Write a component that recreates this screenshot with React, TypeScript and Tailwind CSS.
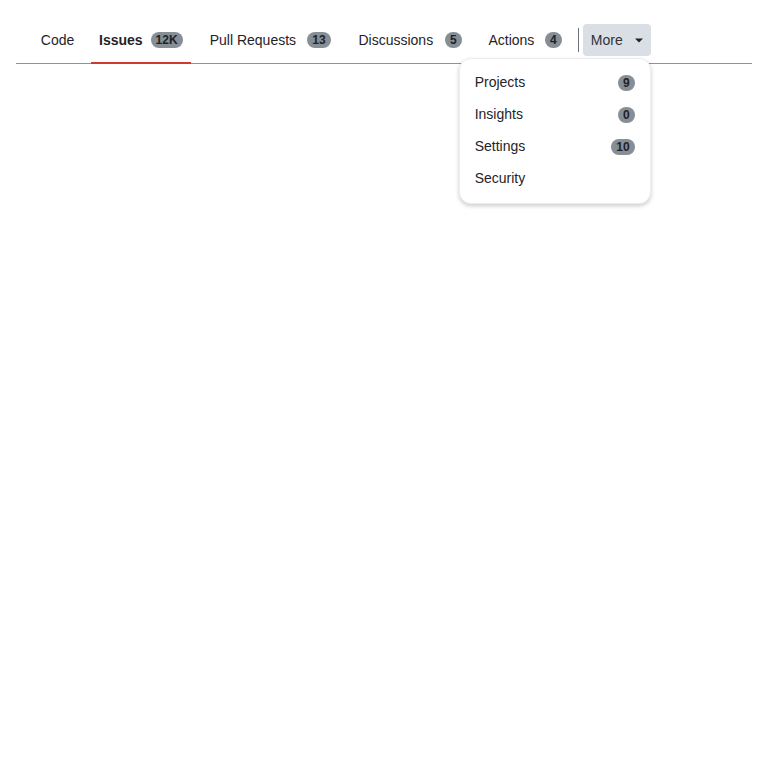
import { useState } from "react";

type Tab = { label: string; count?: string };

const tabs: Tab[] = [
  { label: "Code" },
  { label: "Issues", count: "12K" },
  { label: "Pull Requests", count: "13" },
  { label: "Discussions", count: "5" },
  { label: "Actions", count: "4" },
];

const moreItems: Tab[] = [
  { label: "Projects", count: "9" },
  { label: "Insights", count: "0" },
  { label: "Settings", count: "10" },
  { label: "Security" },
];

function Badge({ children }: { children: string }) {
  return (
    <span className="inline-flex h-4 items-center justify-center rounded-full bg-[#868e96] px-[5px] text-[12px] font-bold leading-none text-[#1f2328]">
      {children}
    </span>
  );
}

// label keeps the width of its bold version so tabs don't shift when active
function Label({ text, bold }: { text: string; bold: boolean }) {
  return (
    <span className="inline-grid text-center">
      <span className={`col-start-1 row-start-1 ${bold ? "font-bold" : ""}`}>{text}</span>
      <span className="invisible col-start-1 row-start-1 h-0 font-bold" aria-hidden>
        {text}
      </span>
    </span>
  );
}

export default function App() {
  const [active] = useState("Issues");

  return (
    <div className="min-h-screen bg-white font-['Liberation_Sans',Arial,sans-serif] text-[14px] text-[#1f2328]">
      <nav className="mx-4 mt-4 flex h-12 items-center border-b border-[#8c939b] pl-4">
        <ul className="flex h-full items-center gap-2 pt-px">
          {tabs.map((t) => (
            <li key={t.label} className="relative flex h-full items-center gap-2 px-2">
              <Label text={t.label} bold={active === t.label} />
              {t.count && <Badge>{t.count}</Badge>}
              {active === t.label && (
                <span className="absolute inset-x-0 -bottom-px h-0.5 bg-[#d03a2e]" />
              )}
            </li>
          ))}
        </ul>
        <span className="ml-2 h-6 w-px bg-[#6b7280]" />
        <div className="relative ml-1">
          <button className="flex h-8 items-center gap-2 rounded bg-[#dadee5] pl-2 pr-1 pt-px text-[#2d3339]">
            More
            <svg width="16" height="16" viewBox="0 0 16 16">
              <path d="M4 6.5 8 10.5l4-4z" fill="#1f2328" />
            </svg>
          </button>
          <div className="absolute right-0 top-full z-10 mt-0.5 w-48 rounded-xl border border-[#eceef1] bg-white py-2 shadow-[0_2px_4px_rgba(0,0,0,0.2)]">
            {moreItems.map((m) => (
              <div key={m.label} className="flex h-8 items-center justify-between px-[15px]">
                <span>{m.label}</span>
                {m.count && <Badge>{m.count}</Badge>}
              </div>
            ))}
          </div>
        </div>
      </nav>
    </div>
  );
}
